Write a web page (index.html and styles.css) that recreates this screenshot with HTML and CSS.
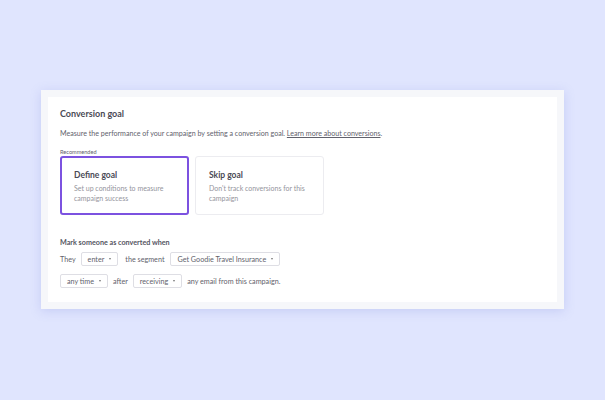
FILE: index.html
```html
<!DOCTYPE html>
<html lang="en">
<head>
    <meta charset="UTF-8">
    <title>Conversion goal</title>
    <link rel="stylesheet" href="styles.css">
</head>
<body>
    <div class="frame">
        <div class="panel">
            <h2 class="title">Conversion goal</h2>
            <p class="lead">Measure the performance of your campaign by setting a conversion goal. <a href="#">Learn more about conversions</a>.</p>

            <div class="tag">Recommended</div>
            <div class="cards">
                <div class="card selected">
                    <h3>Define goal</h3>
                    <p>Set up conditions to measure campaign success</p>
                </div>
                <div class="card">
                    <h3>Skip goal</h3>
                    <p>Don't track conversions for this campaign</p>
                </div>
            </div>

            <h4 class="rule-title">Mark someone as converted when</h4>
            <div class="rule">
                <span>They</span>
                <span class="select">enter <i class="caret"></i></span>
                <span class="wide">the segment</span>
                <span class="select">Get Goodie Travel Insurance <i class="caret"></i></span>
            </div>
            <div class="rule">
                <span class="select">any time <i class="caret"></i></span>
                <span>after</span>
                <span class="select">receiving <i class="caret"></i></span>
                <span>any email from this campaign.</span>
            </div>
        </div>
    </div>
</body>
</html>
```

FILE: styles.css
```css
body {
    margin: 0;
    padding: 90px 0 0 41px;
    background: #e0e5fe;
    font-family: 'Lato', 'Open Sans', sans-serif;
    color: #62626c;
    height: 400px;
    box-sizing: border-box;
}

.frame {
    width: 523px;
    padding: 7px;
    box-sizing: border-box;
    background: #f6f7fa;
    box-shadow: 0 2px 10px rgba(120, 130, 220, 0.25);
}

.panel {
    background: #fff;
    padding: 10px 12px 9px;
    height: 205px;
    box-sizing: border-box;
}

.title {
    margin: 0;
    font-size: 9px;
    font-weight: 700;
    color: #4a4a55;
    line-height: 14px;
}

.lead {
    margin: 8px 0 0;
    font-size: 7.1px;
    line-height: 10px;
}

.lead a {
    color: #62626c;
}

.tag {
    margin-top: 9px;
    font-size: 5.6px;
    line-height: 7px;
    color: #62626c;
}

.cards {
    display: flex;
    gap: 6px;
    margin-top: 1px;
}

.card {
    width: 129px;
    height: 59px;
    box-sizing: border-box;
    border: 1px solid #ececf0;
    border-radius: 3px;
    padding: 12px 13px 0;
}

.card.selected {
    border: 2px solid #7c52e0;
    padding: 11px 12px 0;
}

.card h3 {
    margin: 0;
    font-size: 8.5px;
    font-weight: 700;
    color: #4a4a55;
    line-height: 12px;
}

.card p {
    margin: 2px 0 0;
    font-size: 7px;
    line-height: 10px;
    color: #94949c;
}

.rule-title {
    margin: 23px 0 0;
    font-size: 7.2px;
    font-weight: 700;
    color: #55555f;
    line-height: 10px;
}

.rule {
    display: flex;
    align-items: center;
    gap: 5px;
    font-size: 7.2px;
    margin-top: 4px;
}

.rule + .rule {
    margin-top: 8px;
}

.rule .wide {
    margin: 0 1px 0 2px;
}

.select {
    display: inline-flex;
    align-items: center;
    gap: 5px;
    height: 14px;
    padding: 0 6px;
    box-sizing: border-box;
    border: 1px solid #dedee4;
    border-radius: 2px;
    color: #62626c;
}

.caret {
    width: 0;
    height: 0;
    border-left: 1.5px solid transparent;
    border-right: 1.5px solid transparent;
    border-top: 2px solid #777;
}
```
